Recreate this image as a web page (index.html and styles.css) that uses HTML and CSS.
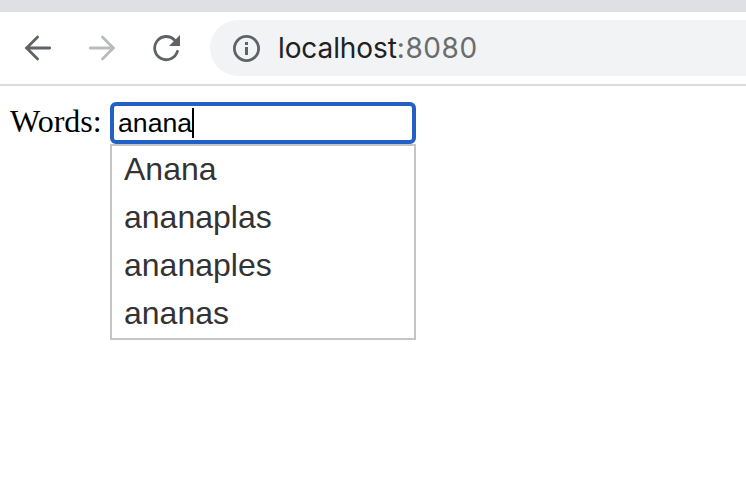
FILE: index.html
```html
<!DOCTYPE html>
<html lang="en">
<head>
<meta charset="utf-8">
<title>Words</title>
<link rel="stylesheet" href="styles.css">
</head>
<body>
<header class="toolbar">
  <svg class="icon back" viewBox="0 0 28 28"><path d="M25.7 14H3M13.6 3L2.6 14L13.6 25"/></svg>
  <svg class="icon forward" viewBox="0 0 28 28"><path d="M2.3 14H25M14.4 3L25.4 14L14.4 25"/></svg>
  <svg class="icon reload" viewBox="0 0 28 28"><path d="M25.4 17.4A11.6 11.6 0 1 1 22.6 6"/><path class="solid" d="M28 1V12H17Z"/></svg>
  <div class="address">
    <svg class="icon info" viewBox="0 0 28 28"><circle cx="14.5" cy="14.5" r="12.1"/><path class="solid" d="M13 8h3v3h-3zM13 13h3v8h-3z"/></svg>
    <span class="url"><span class="host">localhost</span><span class="port">:8080</span></span>
  </div>
</header>
<main class="page">
  <span class="label">Words:</span>
  <div class="field">
    <div class="input"><span>anana</span><i class="caret"></i></div>
    <ul class="menu">
      <li>Anana</li>
      <li>ananaplas</li>
      <li>ananaples</li>
      <li>ananas</li>
    </ul>
  </div>
</main>
</body>
</html>
```
FILE: styles.css
```css
* { box-sizing: border-box; }
body { margin: 0; background: #fff; overflow: hidden; }
.toolbar {
  display: flex;
  align-items: center;
  height: 86px;
  padding-left: 24px;
  border-top: 12px solid #dee0e4;
  border-bottom: 2px solid #dadada;
}
.icon { width: 28px; height: 28px; flex: none; fill: none; stroke: #5f6368; stroke-width: 2.8; }
.icon .solid { fill: #5f6368; stroke: none; }
.back, .forward { stroke-linecap: round; margin: 0 36px 1px 0; }
.forward { stroke: #babbbc; }
.reload { margin-right: 30px; stroke-linecap: round; }
.address {
  display: flex;
  align-items: center;
  flex: 1;
  height: 56px;
  padding-left: 22px;
  background: #f1f3f4;
  border-radius: 28px 0 0 28px;
}
.url { margin-left: 18px; font: 28px/40px Inter, sans-serif; white-space: nowrap; }
.host { color: #202124; letter-spacing: -0.1px; }
.port { color: #6a6c6e; letter-spacing: 0.6px; }
.page { display: flex; padding: 16px 0 0 10px; }
.label { width: 100px; color: #000; font: 32px/38px "Liberation Serif", serif; }
.field { width: 306px; font-family: "Liberation Sans", sans-serif; }
.input {
  display: flex;
  height: 42px;
  padding: 2px 0 0 4px;
  border: 4px solid #2260c6;
  border-radius: 6px;
  color: #000;
  font-size: 26.667px;
  line-height: 30px;
}
.caret { width: 2px; height: 30px; background: #000; }
.menu {
  margin: 0;
  padding: 0;
  border: 2px solid #c5c5c5;
  list-style: none;
  color: #333;
  font-size: 32px;
  line-height: 46px;
}
.menu li { height: 48px; padding-left: 12px; }
```
